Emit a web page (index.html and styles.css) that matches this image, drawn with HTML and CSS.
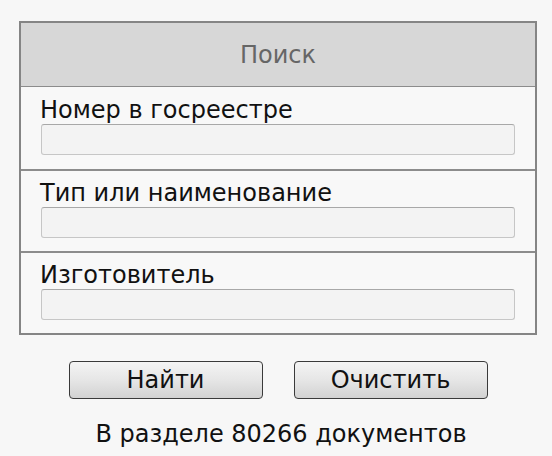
FILE: index.html
```html
<!DOCTYPE html>
<html lang="ru">
<head>
<meta charset="utf-8">
<title>Поиск</title>
<link rel="stylesheet" href="styles.css">
</head>
<body>
<div class="page">
  <div class="panel">
    <div class="panel-head">Поиск</div>
    <div class="field">
      <label class="field-label">Номер в госреестре</label>
      <div class="field-input"></div>
    </div>
    <div class="field">
      <label class="field-label">Тип или наименование</label>
      <div class="field-input"></div>
    </div>
    <div class="field">
      <label class="field-label">Изготовитель</label>
      <div class="field-input"></div>
    </div>
  </div>
  <div class="actions">
    <button class="btn">Найти</button>
    <button class="btn">Очистить</button>
  </div>
  <div class="summary">В разделе 80266 документов</div>
</div>
</body>
</html>
```
FILE: styles.css
```css
html, body {
  margin: 0;
  padding: 0;
  background: #f7f7f7;
}
body {
  font-family: "DejaVu Sans", Verdana, sans-serif;
  color: #111;
}
.page {
  width: 552px;
  height: 456px;
  padding-top: 21px;
  box-sizing: border-box;
}
.panel {
  margin-left: 19px;
  width: 518px;
  box-sizing: border-box;
  border: 2px solid #858585;
  background: #f8f8f8;
}
.panel-head {
  height: 63px;
  background: #d7d7d7;
  border-bottom: 1px solid #8c8c8c;
  display: flex;
  align-items: center;
  justify-content: center;
  font-size: 24px;
  color: #666;
}
.field {
  height: 82px;
  box-sizing: border-box;
  padding: 10px 20px 0 19px;
  display: flex;
  flex-direction: column;
}
.field + .field {
  border-top: 2px solid #8c8c8c;
  padding-top: 9px;
}
.field-label {
  font-size: 24px;
  line-height: 27px;
  height: 27px;
  display: block;
  white-space: nowrap;
}
.field-input {
  margin-left: 1px;
  height: 31px;
  box-sizing: border-box;
  border: 1px solid #c6c6c6;
  border-top-color: #a8a8a8;
  border-radius: 3px;
  background: #f3f3f3;
}
.actions {
  display: flex;
  justify-content: center;
  gap: 31px;
  margin-top: 26px;
  padding-left: 4px;
}
.btn {
  width: 194px;
  height: 38px;
  border: 1px solid #3a3a3a;
  border-radius: 4px;
  background: linear-gradient(to bottom, #f4f4f4 0%, #e6e6e6 50%, #d2d2d2 100%);
  font-family: "DejaVu Sans", Verdana, sans-serif;
  font-size: 24px;
  line-height: 36px;
  color: #111;
  padding: 0;
}
.summary {
  margin-top: 21px;
  text-align: center;
  font-size: 24px;
  padding-left: 10px;
  color: #111;
}
```
